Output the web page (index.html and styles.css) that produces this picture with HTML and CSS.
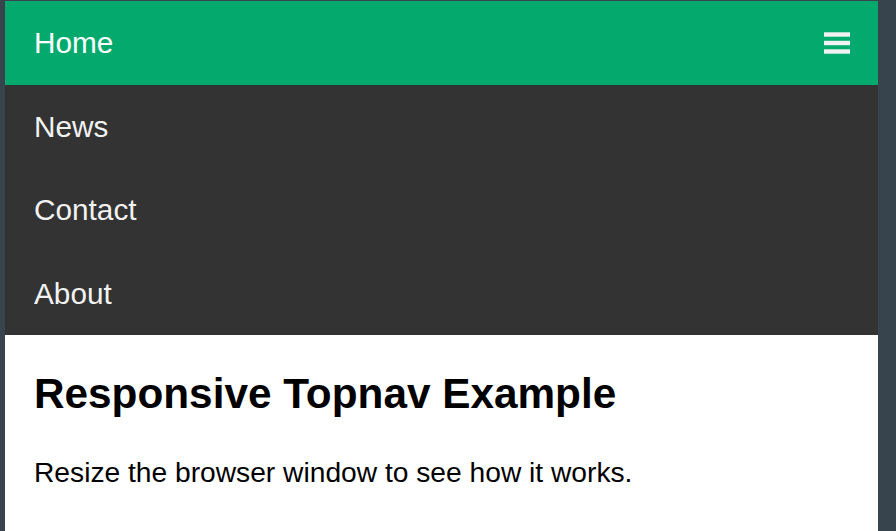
FILE: index.html
```html
<!DOCTYPE html>
<html>
<head>
<meta charset="utf-8">
<link rel="stylesheet" href="styles.css">
</head>
<body>
<div class="frame">
  <div class="topnav">
    <a href="#home" class="link active">Home</a>
    <a href="#news" class="link">News</a>
    <a href="#contact" class="link">Contact</a>
    <a href="#about" class="link">About</a>
    <a href="#" class="icon" aria-label="menu">
      <svg width="26" height="22" viewBox="0 0 26 22"><rect x="0" y="0.3" width="26" height="4.4" fill="#f2f2f2"/><rect x="0" y="8.8" width="26" height="4.4" fill="#f2f2f2"/><rect x="0" y="17.3" width="26" height="4.4" fill="#f2f2f2"/></svg>
    </a>
  </div>
  <div class="content">
    <h2 class="title">Responsive Topnav Example</h2>
    <p class="text">Resize the browser window to see how it works.</p>
  </div>
</div>
</body>
</html>
```
FILE: styles.css
```css
html, body {
  margin: 0;
  padding: 0;
  height: 100%;
}
body {
  background: #38444d;
  overflow: hidden;
  font-family: "Liberation Sans", Arial, sans-serif;
}
.frame {
  margin: 1px 0 0 5px;
  width: 873px;
  height: 530px;
  background: #fff;
  overflow: hidden;
}
.topnav {
  position: relative;
  background: #333;
  display: flex;
  flex-direction: column;
}
.link {
  display: block;
  color: #f2f2f2;
  text-decoration: none;
  font-size: 29.75px;
  line-height: 34.5px;
  padding: 25px 28px 24px 29px;
}
.link.active {
  background: #04AA6D;
  color: #fff;
}
.icon {
  position: absolute;
  right: 28px;
  top: 31px;
  display: block;
  line-height: 0;
}
.content {
  padding-left: 29px;
}
.title {
  font-size: 42.3px;
  font-weight: bold;
  line-height: 48px;
  margin: 35px 0 0;
  color: #000;
}
.text {
  font-size: 28.2px;
  line-height: 32px;
  margin: 38px 0 0;
  color: #000;
}
```
